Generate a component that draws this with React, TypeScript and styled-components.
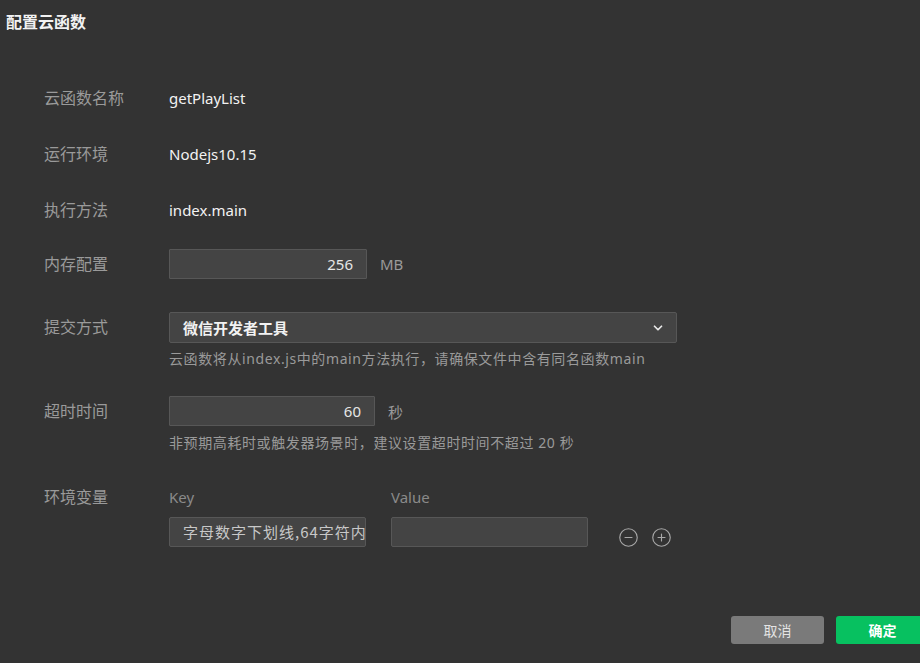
import React from 'react';
import styled, { createGlobalStyle } from 'styled-components';
import { ChevronDown, CircleMinus, CirclePlus } from 'lucide-react';

const GlobalStyle = createGlobalStyle`
  html, body {
    margin: 0;
    padding: 0;
    background: #333333;
    overflow: hidden;
  }
  body {
    font-family: "Noto Sans", "Noto Sans CJK SC", sans-serif;
    font-size: 14px;
    color: #e8e8e8;
  }
`;

const Page = styled.div`
  width: 920px;
  height: 663px;
  background: #333333;
`;

const Title = styled.div`
  padding: 0 6px;
  line-height: 44px;
  height: 44px;
  font-size: 16px;
  font-weight: 700;
  color: #f2f2f2;
`;

const Form = styled.div`
  padding-left: 44px;
  display: flex;
  flex-direction: column;
`;

const Row = styled.div<{ $top: number }>`
  display: grid;
  grid-template-columns: 125px 1fr;
  margin-top: ${(p) => p.$top}px;
`;

const Label = styled.div<{ $lh?: number }>`
  color: #9a9a9a;
  font-size: 16px;
  line-height: ${(p) => p.$lh ?? 30}px;
`;

const Value = styled.div`
  color: #f2f2f2;
  font-size: 15px;
  line-height: 30px;
`;

const Inline = styled.div`
  display: flex;
  align-items: center;
  gap: 13px;
`;

const NumberBox = styled.div<{ $w: number }>`
  box-sizing: border-box;
  width: ${(p) => p.$w}px;
  height: 30px;
  background: #444444;
  border: 1px solid #575757;
  border-radius: 1px;
  text-align: right;
  padding-right: 13px;
  line-height: 28px;
  font-size: 15px;
  color: #e6e6e6;
`;

const Unit = styled.span`
  color: #9a9a9a;
  font-size: 15px;
`;

const Select = styled.div`
  box-sizing: border-box;
  width: 508px;
  height: 31px;
  background: #444444;
  border: 1px solid #575757;
  border-radius: 2px;
  display: flex;
  align-items: center;
  justify-content: space-between;
  padding: 0 11px 0 13px;
  font-size: 15px;
  font-weight: 700;
  color: #f2f2f2;
`;

const Hint = styled.div<{ $top: number }>`
  margin-top: ${(p) => p.$top}px;
  line-height: 20px;
  font-size: 14px;
  letter-spacing: 0.6px;
  color: #9a9a9a;
`;

const EnvGrid = styled.div`
  display: grid;
  grid-template-columns: 197px 197px auto;
  column-gap: 25px;
  row-gap: 10px;
  align-items: end;
`;

const ColHead = styled.div`
  color: #8a8a8a;
  font-size: 15px;
  line-height: 20px;
`;

const EnvInput = styled.div`
  box-sizing: border-box;
  height: 30px;
  background: #444444;
  border: 1px solid #575757;
  border-radius: 2px;
  padding: 0 0 0 13px;
  line-height: 28px;
  white-space: nowrap;
  overflow: hidden;
  color: #c8c8c8;
  font-family: "Noto Sans CJK SC", "DejaVu Sans Mono", monospace;
  font-size: 15px;
  letter-spacing: 1px;
`;

const IconRow = styled.div`
  display: flex;
  gap: 12px;
  padding-left: 5px;
  margin-bottom: -1px;
  color: #a8a8a8;
`;

const Footer = styled.div`
  display: flex;
  justify-content: flex-end;
  gap: 12px;
  margin-top: 69px;
  margin-right: -9px;
`;

const Button = styled.div<{ $primary?: boolean }>`
  width: 93px;
  height: 28px;
  border-radius: 3px;
  display: flex;
  align-items: center;
  justify-content: center;
  font-size: 14px;
  background: ${(p) => (p.$primary ? '#07c160' : '#7a7a7a')};
  color: ${(p) => (p.$primary ? '#ffffff' : '#e4e4e4')};
  font-weight: ${(p) => (p.$primary ? 700 : 400)};
`;

export default function App() {
  return (
    <Page>
      <GlobalStyle />
      <Title>配置云函数</Title>
      <Form>
        <Row $top={39}>
          <Label>云函数名称</Label>
          <Value>getPlayList</Value>
        </Row>
        <Row $top={26}>
          <Label>运行环境</Label>
          <Value>Nodejs10.15</Value>
        </Row>
        <Row $top={26}>
          <Label>执行方法</Label>
          <Value>index.main</Value>
        </Row>
        <Row $top={24}>
          <Label>内存配置</Label>
          <Inline>
            <NumberBox $w={198}>256</NumberBox>
            <Unit>MB</Unit>
          </Inline>
        </Row>
        <Row $top={33}>
          <Label>提交方式</Label>
          <div>
            <Select>
              <span>微信开发者工具</span>
              <ChevronDown size={14} strokeWidth={3} color="#e8e8e8" />
            </Select>
            <Hint $top={6}>云函数将从index.js中的main方法执行，请确保文件中含有同名函数main</Hint>
          </div>
        </Row>
        <Row $top={27}>
          <Label>超时时间</Label>
          <div>
            <Inline>
              <NumberBox $w={206}>60</NumberBox>
              <Unit>秒</Unit>
            </Inline>
            <Hint $top={7}>非预期高耗时或触发器场景时，建议设置超时时间不超过 20 秒</Hint>
          </div>
        </Row>
        <Row $top={34}>
          <Label $lh={20}>环境变量</Label>
          <EnvGrid>
            <ColHead>Key</ColHead>
            <ColHead>Value</ColHead>
            <span />
            <EnvInput>字母数字下划线,64字符内</EnvInput>
            <EnvInput />
            <IconRow>
              <CircleMinus size={21} strokeWidth={1.3} />
              <CirclePlus size={21} strokeWidth={1.3} />
            </IconRow>
          </EnvGrid>
        </Row>
      </Form>
      <Footer>
        <Button>取消</Button>
        <Button $primary>确定</Button>
      </Footer>
    </Page>
  );
}
